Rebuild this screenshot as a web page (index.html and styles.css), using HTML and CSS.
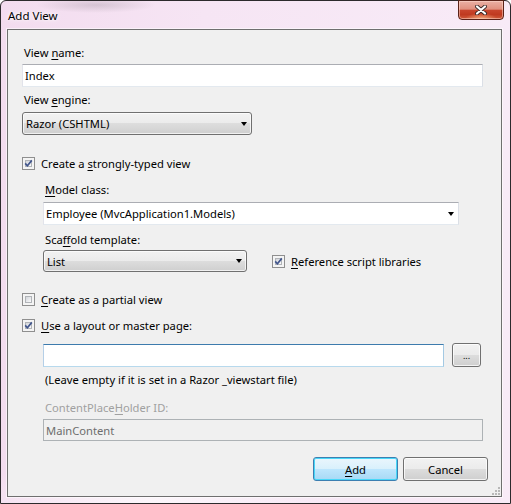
FILE: index.html
```html
<!DOCTYPE html>
<html lang="en">
<head>
    <meta charset="UTF-8">
    <title>Add View</title>
    <link rel="stylesheet" href="styles.css">
</head>
<body>
    <div class="window">
      <div class="titlebar">
        <span class="title">Add View</span>
        <button class="close-btn" title="Close">
          <svg width="12" height="10" viewBox="0 0 12 10">
            <path d="M2 1.5L10 8.5M10 1.5L2 8.5" stroke="#3b2a28" stroke-width="4" stroke-linecap="round"/>
            <path d="M2 1.5L10 8.5M10 1.5L2 8.5" stroke="#fff" stroke-width="2.2" stroke-linecap="round"/>
          </svg>
        </button>
      </div>

      <div class="client">
        <div class="form">
          <label class="lbl lbl-first">View <u>n</u>ame:</label>
          <input class="textbox" type="text" value="Index">

          <label class="lbl mt-5">View <u>e</u>ngine:</label>
          <div class="dropdown engine"><span>Razor (CSHTML)</span><i class="arrow"></i></div>

          <div class="check-row strongly">
            <span class="cb on"><svg width="9" height="9" viewBox="0 0 9 9"><path d="M1.2 4.4L3.4 6.8L7.8 1.4" /></svg></span>
            <span>Create a <u>s</u>trongly-typed view</span>
          </div>

          <div class="indent">
            <label class="lbl mt-11"><u>M</u>odel class:</label>
            <div class="combo"><span>Employee (MvcApplication1.Models)</span><i class="arrow"></i></div>

            <label class="lbl mt-7">Sca<u>f</u>fold template:</label>
            <div class="scaffold-row">
              <div class="dropdown scaffold"><span>List</span><i class="arrow"></i></div>
              <div class="check-row ref">
                <span class="cb on"><svg width="9" height="9" viewBox="0 0 9 9"><path d="M1.2 4.4L3.4 6.8L7.8 1.4" /></svg></span>
                <span><u>R</u>eference script libraries</span>
              </div>
            </div>
          </div>

          <div class="check-row partial">
            <span class="cb"></span>
            <span><u>C</u>reate as a partial view</span>
          </div>
          <div class="check-row layout">
            <span class="cb on"><svg width="9" height="9" viewBox="0 0 9 9"><path d="M1.2 4.4L3.4 6.8L7.8 1.4" /></svg></span>
            <span><u>U</u>se a layout or master page:</span>
          </div>

          <div class="indent">
            <div class="layout-row">
              <input class="textbox focused" type="text" value="">
              <button class="btn browse">...</button>
            </div>
            <div class="hint">(Leave empty if it is set in a Razor _viewstart file)</div>
            <label class="lbl disabled mt-13">ContentPlace<u>H</u>older ID:</label>
            <input class="textbox readonly" type="text" value="MainContent" disabled>
          </div>
        </div>

        <div class="buttons">
          <button class="btn default"><u>A</u>dd</button>
          <button class="btn">Cancel</button>
        </div>

        <svg class="grip" width="8" height="8" viewBox="0 0 8 8">
          <rect x="6" y="0" width="2" height="2"/>
          <rect x="3" y="3" width="2" height="2"/><rect x="6" y="3" width="2" height="2"/>
          <rect x="0" y="6" width="2" height="2"/><rect x="3" y="6" width="2" height="2"/><rect x="6" y="6" width="2" height="2"/>
        </svg>
      </div>
    </div>
</body>
</html>
```

FILE: styles.css
```css
body {
  margin: 0;
  font: 11.2px/15px "Noto Sans", sans-serif;
  color: #000;
}

u {
  text-decoration-thickness: 1px;
  text-underline-offset: 2px;
}

/* window frame */
.window {
  width: 511px;
  height: 504px;
  box-sizing: border-box;
  border: 1px solid #2c2a2c;
  border-radius: 6px 6px 0 0;
  display: flex;
  flex-direction: column;
  background:
    radial-gradient(ellipse 60px 8px at 95px 4px, rgba(120, 110, 120, 0.25), transparent),
    radial-gradient(ellipse 200px 40px at 150px 500px, rgba(255, 255, 255, 0.7), transparent),
    linear-gradient(90deg, #f3dcef 0%, #f6e5f4 40%, #f8ebf7 100%);
}

.titlebar {
  height: 28px;
  display: flex;
  justify-content: space-between;
  align-items: flex-start;
  padding: 0 6px 0 7px;
}
.title {
  margin-top: 7px;
  font-size: 11.5px;
  text-shadow: 0 0 6px #fff, 0 0 3px #fff;
}
.close-btn {
  width: 46px;
  height: 20px;
  margin-top: -1px;
  padding: 0;
  border: 1px solid #5a2218;
  border-radius: 0 0 4px 4px;
  display: flex;
  align-items: center;
  justify-content: center;
  background:
    radial-gradient(ellipse 16px 6px at 50% 100%, rgba(255, 190, 140, 0.8), transparent),
    linear-gradient(#eab0a4 0%, #e0907f 45%, #c8452c 52%, #c03a20 75%, #cf5a3a 100%);
  box-shadow: inset 0 0 0 1px rgba(255, 220, 210, 0.5);
}

/* client area */
.client {
  position: relative;
  flex: 1;
  margin: 0 8px 6px 6px;
  padding: 0 13px 0 14px;
  border: 1px solid #6f6f6f;
  background: #f0f0f0;
  box-shadow: 0 0 0 1px rgba(255, 255, 255, 0.55);
  display: flex;
  flex-direction: column;
}

.form {
  margin-right: 5px;
  display: flex;
  flex-direction: column;
  align-items: flex-start;
}

.lbl {
  display: block;
  padding-left: 2px;
}
.lbl-first { margin-top: 15px; }
.mt-5 { margin-top: 5px; }
.mt-7 { margin-top: 7px; }
.mt-11 { margin-top: 11px; }
.mt-13 { margin-top: 13px; }

.lbl.disabled { color: #a0a0a0; }

/* text boxes */
.textbox {
  box-sizing: border-box;
  width: 100%;
  height: 23px;
  margin: 4px 0 0;
  padding: 0 2px;
  font: inherit;
  color: #000;
  background: #fff;
  border: 1px solid;
  border-color: #abadb3 #dbdfe6 #e3e9ef #e2e3ea;
  outline: none;
}
.textbox.focused {
  margin: 0;
  width: 401px;
  border-color: #3d7bad #a4c9e3 #b7d9ed #b5cfe7;
}
.textbox.readonly {
  height: 22px;
  color: #6d6d6d;
  background: #f0f0f0;
  border-color: #adb2b5;
}

/* dropdowns */
.dropdown,
.combo {
  box-sizing: border-box;
  height: 23px;
  display: flex;
  align-items: center;
  justify-content: space-between;
  padding: 0 4px 0 3px;
}
.dropdown {
  border: 1px solid #707070;
  border-radius: 3px;
  background: linear-gradient(#f2f2f2 0%, #ebebeb 50%, #dddddd 50%, #cfcfcf 100%);
  box-shadow: inset 0 0 0 1px rgba(255, 255, 255, 0.7);
}
.dropdown.engine {
  width: 230px;
  margin-top: 5px;
}
.dropdown.scaffold {
  width: 204px;
  height: 22px;
}
.combo {
  width: 416px;
  margin-top: 5px;
  padding-left: 2px;
  background: #fff;
  border: 1px solid;
  border-color: #abadb3 #dbdfe6 #e3e9ef #e2e3ea;
}
.arrow {
  width: 0;
  height: 0;
  border-left: 3.5px solid transparent;
  border-right: 3.5px solid transparent;
  border-top: 4px solid #000;
}

/* checkboxes */
.check-row {
  display: flex;
  align-items: center;
  gap: 6px;
  height: 15px;
}
.check-row.strongly { margin-top: 21px; }
.check-row.partial { margin-top: 20px; }
.check-row.layout { margin-top: 11px; }
.check-row.ref { margin-left: 25px; }

.cb {
  box-sizing: border-box;
  width: 13px;
  height: 13px;
  border: 1px solid #8f8f8f;
  background: #f4f4f4;
  padding: 1px;
  display: flex;
  align-items: center;
  justify-content: center;
  position: relative;
}
.cb::before {
  content: "";
  position: absolute;
  inset: 2px;
  border: 1px solid #b1b4b8;
  background: linear-gradient(135deg, #d2d5da 0%, #eeeff1 70%, #fbfbfb 100%);
}
.cb svg {
  position: relative;
}
.cb svg path {
  fill: none;
  stroke: #41558c;
  stroke-width: 1.7;
}

.indent {
  margin-left: 21px;
  align-self: stretch;
  display: flex;
  flex-direction: column;
  align-items: flex-start;
}

.scaffold-row {
  margin-top: 3px;
  display: flex;
  align-items: center;
}

.layout-row {
  margin-top: 10px;
  display: flex;
  align-items: flex-end;
  gap: 8px;
}

.hint {
  margin-top: 5px;
  padding-left: 2px;
}

/* buttons */
.btn {
  box-sizing: border-box;
  height: 24px;
  padding: 0;
  font: inherit;
  color: #000;
  border: 1px solid #707070;
  border-radius: 3px;
  background: linear-gradient(#f2f2f2 0%, #ebebeb 50%, #dddddd 50%, #cfcfcf 100%);
  box-shadow: inset 0 0 0 1px rgba(255, 255, 255, 0.75);
}
.btn.browse {
  width: 29px;
  font-size: 9px;
}
.btn.default {
  border-color: #3c7fb1;
  background: linear-gradient(#eaf6fd 0%, #d9f0fc 50%, #bee6fd 50%, #a7d9f5 100%);
  box-shadow: inset 0 0 0 1px #48d7f8;
}

.buttons {
  margin-top: 16px;
  display: flex;
  justify-content: flex-end;
  gap: 5px;
}
.buttons .btn {
  width: 85px;
}

.grip {
  position: absolute;
  right: 1px;
  bottom: 1px;
  fill: #b8b8b8;
}
```
